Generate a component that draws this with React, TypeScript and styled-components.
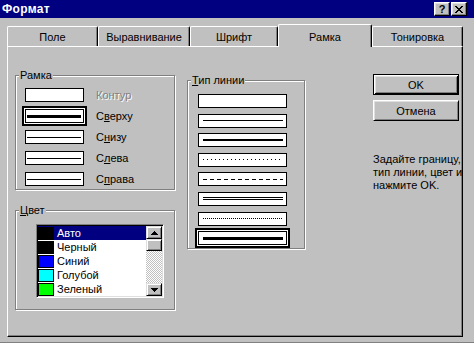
import React from 'react';
import styled, { createGlobalStyle } from 'styled-components';

const GlobalStyle = createGlobalStyle`
  html, body {
    margin: 0;
    padding: 0;
    background: #c0c0c0;
  }
  body {
    font-family: "Liberation Sans", Arial, sans-serif;
    font-size: 11px;
    color: #000;
  }
  * {
    box-sizing: border-box;
  }
`;

const Window = styled.div`
  width: 474px;
  height: 343px;
  background: #c0c0c0;
  border-bottom: 1px solid #808080;
  overflow: hidden;
  display: flex;
  flex-direction: column;
`;

const TitleBar = styled.div`
  height: 18px;
  flex-shrink: 0;
  background: #000080;
  display: flex;
  align-items: center;
  justify-content: space-between;
  padding: 0 7px 0 2px;
`;

const TitleText = styled.span`
  color: #fff;
  font-weight: bold;
  font-size: 12px;
  letter-spacing: 0.3px;
`;

const CaptionButtons = styled.div`
  display: flex;
  gap: 1px;
`;

const CaptionButton = styled.div`
  width: 16px;
  height: 14px;
  background: #c0c0c0;
  border: 1px solid;
  border-color: #fff #000 #000 #fff;
  box-shadow: inset -1px -1px #808080, inset 1px 1px #dfdfdf;
  display: flex;
  align-items: center;
  justify-content: center;
  font-weight: bold;
  font-size: 11px;
  line-height: 1;
`;

const TabStrip = styled.div`
  margin-top: 6px;
  padding-left: 7px;
  height: 22px;
  flex-shrink: 0;
  display: flex;
  align-items: flex-end;
`;

interface TabProps {
  $active?: boolean;
  $w: number;
}

const Tab = styled.div<TabProps>`
  width: ${({ $w }) => $w}px;
  height: ${({ $active }) => ($active ? 23 : 20)}px;
  margin-bottom: ${({ $active }) => ($active ? -1 : 0)}px;
  position: relative;
  z-index: ${({ $active }) => ($active ? 1 : 0)};
  background: #c0c0c0;
  border-left: 1px solid #fff;
  border-top: 1px solid #fff;
  border-right: 1px solid #000;
  border-radius: 2px 2px 0 0;
  box-shadow: inset -1px 0 #808080;
  display: flex;
  justify-content: center;
  align-items: center;
  padding-top: ${({ $active }) => ($active ? 2 : 1)}px;
`;

const Page = styled.div`
  margin-left: 7px;
  width: 456px;
  height: 291px;
  flex-shrink: 0;
  border-left: 1px solid #fff;
  border-top: 1px solid #fff;
  border-right: 1px solid #000;
  border-bottom: 1px solid #000;
  box-shadow: inset -1px -1px #808080;
  display: flex;
  padding-left: 7px;
  align-items: flex-start;
`;

const LeftColumn = styled.div`
  margin-top: 28px;
  display: flex;
  flex-direction: column;
  gap: 20px;
`;

const MiddleColumn = styled.div`
  margin-top: 33px;
  margin-left: 12px;
`;

const RightColumn = styled.div`
  margin-top: 27px;
  margin-left: 68px;
  display: flex;
  flex-direction: column;
  gap: 5px;
`;

interface GroupProps {
  $w: number;
  $h: number;
  $pad: string;
}

const GroupBox = styled.div<GroupProps>`
  position: relative;
  width: ${({ $w }) => $w}px;
  height: ${({ $h }) => $h}px;
  padding: ${({ $pad }) => $pad};
  border: 1px solid #808080;
  box-shadow: inset 1px 1px #fff, 1px 1px #fff;
`;

const GroupLabel = styled.span`
  position: absolute;
  top: -7px;
  left: 3px;
  padding: 0 1px;
  line-height: 13px;
  background: #c0c0c0;
`;

const OptionList = styled.div`
  display: flex;
  flex-direction: column;
  gap: 7px;
`;

const OptionRow = styled.div`
  display: flex;
  align-items: center;
  gap: 12px;
`;

interface SampleProps {
  $w: number;
  $pad: string;
  $selected?: boolean;
}

const SampleBox = styled.div<SampleProps>`
  width: ${({ $w }) => $w}px;
  height: 14px;
  flex-shrink: 0;
  background: #fff;
  border: 1px solid #000;
  display: flex;
  align-items: center;
  padding: ${({ $pad }) => $pad};
  box-shadow: ${({ $selected }) => ($selected ? '0 0 0 1px #fff, 0 0 0 3px #000' : 'none')};
`;

type LineKind = 'none' | 'thin' | 'medium' | 'sparse' | 'dashed' | 'double' | 'fine' | 'thick';

const lineStyles: Record<LineKind, string> = {
  none: 'height: 0;',
  thin: 'height: 1px; background: #000;',
  medium: 'height: 2px; background: #000;',
  thick: 'height: 3px; background: #000;',
  sparse: 'height: 1px; background: repeating-linear-gradient(90deg, #000 0 1px, transparent 1px 4px);',
  dashed: 'height: 1px; background: repeating-linear-gradient(90deg, #000 0 4px, transparent 4px 7px);',
  fine: 'height: 1px; background: repeating-linear-gradient(90deg, #000 0 1px, transparent 1px 2px);',
  double: 'height: 3px; border-top: 1px solid #000; border-bottom: 1px solid #000;',
};

const SampleLine = styled.div<{ $kind: LineKind }>`
  flex: 1;
  ${({ $kind }) => lineStyles[$kind]}
`;

const OptionLabel = styled.span<{ $disabled?: boolean }>`
  line-height: 14px;
  color: ${({ $disabled }) => ($disabled ? '#808080' : '#000')};
  text-shadow: ${({ $disabled }) => ($disabled ? '1px 1px #fff' : 'none')};
`;

const LineList = styled.div`
  display: flex;
  flex-direction: column;
  gap: 5.6px;
`;

const ListBox = styled.div`
  width: 128px;
  height: 74px;
  border: 1px solid;
  border-color: #808080 #fff #fff #808080;
  box-shadow: inset 1px 1px #000, inset -1px -1px #dfdfdf;
  padding: 1px;
  display: flex;
`;

const ListItems = styled.div`
  flex: 1;
  background: #fff;
  overflow: hidden;
`;

const ListRow = styled.div<{ $selected?: boolean }>`
  height: 14px;
  display: flex;
  align-items: center;
  background: ${({ $selected }) => ($selected ? '#000080' : '#fff')};
  color: ${({ $selected }) => ($selected ? '#fff' : '#000')};
`;

const Swatch = styled.span<{ $color: string }>`
  width: 16px;
  height: 13px;
  flex-shrink: 0;
  background: ${({ $color }) => $color};
  border: 1px solid #000;
  margin-right: 3px;
`;

const ScrollBar = styled.div`
  width: 16px;
  display: flex;
  flex-direction: column;
`;

const ScrollButton = styled.div<{ $h: number }>`
  height: ${({ $h }) => $h}px;
  flex-shrink: 0;
  background: #c0c0c0;
  border: 1px solid;
  border-color: #dfdfdf #000 #000 #dfdfdf;
  box-shadow: inset 1px 1px #fff, inset -1px -1px #808080;
  display: flex;
  align-items: center;
  justify-content: center;
`;

const ScrollTrack = styled.div`
  flex: 1;
  background: repeating-conic-gradient(#c0c0c0 0 25%, #fff 0 50%) 0 0 / 2px 2px;
`;

const Button = styled.div<{ $default?: boolean }>`
  width: 86px;
  height: 21px;
  background: #c0c0c0;
  display: flex;
  align-items: center;
  justify-content: center;
  border: 1px solid;
  border-color: ${({ $default }) => ($default ? '#000' : '#fff #000 #000 #fff')};
  box-shadow: ${({ $default }) =>
    $default
      ? 'inset 1px 1px #fff, inset -1px -1px #000, inset 2px 2px #dfdfdf, inset -2px -2px #808080'
      : 'inset 1px 1px #dfdfdf, inset -1px -1px #808080'};
`;

const Hint = styled.div`
  margin-top: 27px;
  line-height: 13px;
  white-space: nowrap;
`;

const Arrow: React.FC<{ down?: boolean }> = ({ down }) => (
  <svg width="7" height="4" viewBox="0 0 7 4" shapeRendering="crispEdges">
    <path d={down ? 'M0 0h7v1h-1v1h-1v1h-1v1h-1v-1h-1v-1h-1v-1h-1z' : 'M3 0h1v1h1v1h1v1h1v1h-7v-1h1v-1h1v-1h1z'} fill="#000" />
  </svg>
);

const CloseGlyph: React.FC = () => (
  <svg width="8" height="7" viewBox="0 0 8 7" shapeRendering="crispEdges">
    <path
      d="M0 0h2v1h-2zM6 0h2v1h-2zM1 1h2v1h-2zM5 1h2v1h-2zM2 2h4v1h-4zM3 3h2v1h-2zM2 4h4v1h-4zM1 5h2v1h-2zM5 5h2v1h-2zM0 6h2v1h-2zM6 6h2v1h-2z"
      fill="#000"
    />
  </svg>
);

const tabs = [
  { label: 'Поле', w: 91 },
  { label: 'Выравнивание', w: 92 },
  { label: 'Шрифт', w: 88 },
  { label: 'Рамка', w: 94, active: true },
  { label: 'Тонировка', w: 91 },
];

const borderOptions: { label: React.ReactNode; kind: LineKind; selected?: boolean; disabled?: boolean }[] = [
  { label: 'Контур', kind: 'none', disabled: true },
  { label: <>С<u>в</u>ерху</>, kind: 'thick', selected: true },
  { label: <>С<u>н</u>изу</>, kind: 'thin' },
  { label: <>С<u>л</u>ева</>, kind: 'thin' },
  { label: <>С<u>п</u>рава</>, kind: 'thin' },
];

const lineKinds: LineKind[] = ['none', 'thin', 'medium', 'sparse', 'dashed', 'double', 'fine', 'thick'];

const colors = [
  { name: 'Авто', color: '#000', selected: true },
  { name: 'Черный', color: '#000' },
  { name: 'Синий', color: '#0000ff' },
  { name: 'Голубой', color: '#00ffff' },
  { name: 'Зеленый', color: '#00ff00' },
];

const App: React.FC = () => {
  return (
    <>
      <GlobalStyle />
      <Window>
        <TitleBar>
          <TitleText>Формат</TitleText>
          <CaptionButtons>
            <CaptionButton>?</CaptionButton>
            <CaptionButton>
              <CloseGlyph />
            </CaptionButton>
          </CaptionButtons>
        </TitleBar>

        <TabStrip>
          {tabs.map((t) => (
            <Tab key={t.label} $w={t.w} $active={t.active}>
              {t.label}
            </Tab>
          ))}
        </TabStrip>

        <Page>
          <LeftColumn>
            <GroupBox $w={160} $h={115} $pad="12px 0 0 9px">
              <GroupLabel>Рамка</GroupLabel>
              <OptionList>
                {borderOptions.map((o, i) => (
                  <OptionRow key={i}>
                    <SampleBox $w={59} $pad="0 2px 0 1px" $selected={o.selected}>
                      <SampleLine $kind={o.kind} />
                    </SampleBox>
                    <OptionLabel $disabled={o.disabled}>{o.label}</OptionLabel>
                  </OptionRow>
                ))}
              </OptionList>
            </GroupBox>

            <GroupBox $w={160} $h={100} $pad="13px 0 0 20px">
              <GroupLabel>
                <u>Ц</u>вет
              </GroupLabel>
              <ListBox>
                <ListItems>
                  {colors.map((c) => (
                    <ListRow key={c.name} $selected={c.selected}>
                      <Swatch $color={c.color} />
                      {c.name}
                    </ListRow>
                  ))}
                </ListItems>
                <ScrollBar>
                  <ScrollButton $h={13}>
                    <Arrow />
                  </ScrollButton>
                  <ScrollButton $h={12} />
                  <ScrollTrack />
                  <ScrollButton $h={13}>
                    <Arrow down />
                  </ScrollButton>
                </ScrollBar>
              </ListBox>
            </GroupBox>
          </LeftColumn>

          <MiddleColumn>
            <GroupBox $w={118} $h={169} $pad="13px 0 0 10px">
              <GroupLabel>
                <u>Т</u>ип линии
              </GroupLabel>
              <LineList>
                {lineKinds.map((k, i) => (
                  <SampleBox key={i} $w={89} $pad="0 3px 0 4px" $selected={i === lineKinds.length - 1}>
                    <SampleLine $kind={k} />
                  </SampleBox>
                ))}
              </LineList>
            </GroupBox>
          </MiddleColumn>

          <RightColumn>
            <Button $default>OK</Button>
            <Button>Отмена</Button>
            <Hint>
              Задайте границу,
              <br />
              тип линии, цвет и
              <br />
              нажмите OK.
            </Hint>
          </RightColumn>
        </Page>
      </Window>
    </>
  );
};

export default App;
